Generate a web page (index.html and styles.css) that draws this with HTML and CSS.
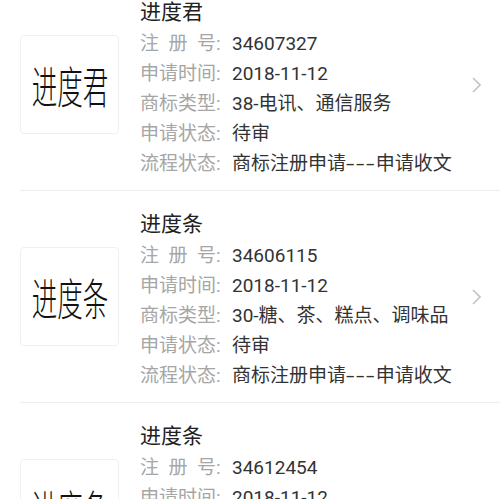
FILE: index.html
```html
<!DOCTYPE html>
<html>
<head lang="zh">
    <meta charset="UTF-8">
    <title>商标进度</title>
    <link rel="stylesheet" href="styles.css">
</head>
<body>
    <div class="list">
        <div class="card">
            <div class="logo"><span>进度君</span></div>
            <div class="info">
                <div class="title">进度君</div>
                <div class="row"><span class="label">注册号</span><span class="colon">:</span><span class="value">34607327</span></div>
                <div class="row"><span class="label">申请时间</span><span class="colon">:</span><span class="value">2018-11-12</span></div>
                <div class="row"><span class="label">商标类型</span><span class="colon">:</span><span class="value">38-电讯、通信服务</span></div>
                <div class="row"><span class="label">申请状态</span><span class="colon">:</span><span class="value">待审</span></div>
                <div class="row"><span class="label">流程状态</span><span class="colon">:</span><span class="value">商标注册申请<span class="dash">---</span>申请收文</span></div>
            </div>
            <svg class="arrow" width="9" height="16" viewBox="0 0 9 16"><path d="M1 1 L8 8 L1 15" fill="none" stroke="#c4c4c4" stroke-width="1.6"/></svg>
        </div>
        <div class="card">
            <div class="logo"><span>进度条</span></div>
            <div class="info">
                <div class="title">进度条</div>
                <div class="row"><span class="label">注册号</span><span class="colon">:</span><span class="value">34606115</span></div>
                <div class="row"><span class="label">申请时间</span><span class="colon">:</span><span class="value">2018-11-12</span></div>
                <div class="row"><span class="label">商标类型</span><span class="colon">:</span><span class="value">30-糖、茶、糕点、调味品</span></div>
                <div class="row"><span class="label">申请状态</span><span class="colon">:</span><span class="value">待审</span></div>
                <div class="row"><span class="label">流程状态</span><span class="colon">:</span><span class="value">商标注册申请<span class="dash">---</span>申请收文</span></div>
            </div>
            <svg class="arrow" width="9" height="16" viewBox="0 0 9 16"><path d="M1 1 L8 8 L1 15" fill="none" stroke="#c4c4c4" stroke-width="1.6"/></svg>
        </div>
        <div class="card">
            <div class="logo"><span>进度条</span></div>
            <div class="info">
                <div class="title">进度条</div>
                <div class="row"><span class="label">注册号</span><span class="colon">:</span><span class="value">34612454</span></div>
                <div class="row"><span class="label">申请时间</span><span class="colon">:</span><span class="value">2018-11-12</span></div>
                <div class="row"><span class="label">商标类型</span><span class="colon">:</span><span class="value">30-糖、茶、糕点、调味品</span></div>
                <div class="row"><span class="label">申请状态</span><span class="colon">:</span><span class="value">待审</span></div>
                <div class="row"><span class="label">流程状态</span><span class="colon">:</span><span class="value">商标注册申请<span class="dash">---</span>申请收文</span></div>
            </div>
            <svg class="arrow" width="9" height="16" viewBox="0 0 9 16"><path d="M1 1 L8 8 L1 15" fill="none" stroke="#c4c4c4" stroke-width="1.6"/></svg>
        </div>
    </div>
</body>
</html>
```

FILE: styles.css
```css
body {
    margin: 0;
    background: #fff;
    overflow: hidden;
    font-family: Roboto, "Noto Sans CJK SC", sans-serif;
}
.list {
    margin-top: -21px;
}
.card {
    display: flex;
    align-items: center;
    height: 211px;
    margin-left: 20px;
    padding-right: 19px;
    border-bottom: 1px solid #eeeeee;
}
.logo {
    flex: none;
    width: 97px;
    height: 97px;
    border: 1px solid #f0f0f0;
    border-radius: 4px;
    display: flex;
    align-items: center;
    justify-content: center;
    overflow: hidden;
}
.logo span {
    font-family: "Noto Sans CJK SC", serif;
    font-weight: 300;
    font-size: 44px;
    line-height: 44px;
    color: #111;
    white-space: nowrap;
    transform: scaleX(0.58);
}
.info {
    flex: 1;
    align-self: flex-start;
    padding: 16px 0 11px 21px;
}
.title {
    font-size: 21px;
    line-height: 34px;
    color: #222;
}
.row {
    display: flex;
    font-size: 19px;
    line-height: 30px;
    white-space: nowrap;
}
.label {
    width: 76px;
    color: #a6a6a6;
    text-align: justify;
    text-align-last: justify;
}
.colon {
    width: 16px;
    color: #a6a6a6;
}
.value {
    color: #333;
}
.dash {
    display: inline-block;
    letter-spacing: 1px;
    margin-right: 11px;
    transform: scaleX(1.6);
    transform-origin: left center;
}
.arrow {
    flex: none;
}
```
